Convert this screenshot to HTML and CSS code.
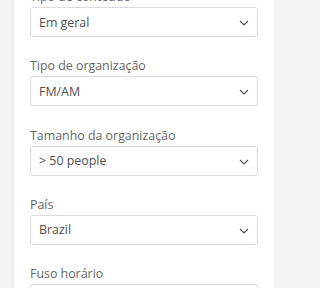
FILE: index.html
```html
<!DOCTYPE html>
<html lang="pt">
<head>
<meta charset="utf-8">
<link rel="stylesheet" href="styles.css">
</head>
<body>
<div class="page">
  <div class="side side-left"></div>
  <div class="card">
    <div class="fields">
      <div class="field">
        <div class="label">Tipo de conteúdo</div>
        <div class="select"><span class="value">Em geral</span><svg class="chev" width="10" height="6" viewBox="0 0 10 6"><polyline points="1,1 5,5 9,1" fill="none" stroke="#555" stroke-width="1.2"/></svg></div>
      </div>
      <div class="field">
        <div class="label">Tipo de organização</div>
        <div class="select"><span class="value">FM/AM</span><svg class="chev" width="10" height="6" viewBox="0 0 10 6"><polyline points="1,1 5,5 9,1" fill="none" stroke="#555" stroke-width="1.2"/></svg></div>
      </div>
      <div class="field">
        <div class="label">Tamanho da organização</div>
        <div class="select"><span class="value">&gt; 50 people</span><svg class="chev" width="10" height="6" viewBox="0 0 10 6"><polyline points="1,1 5,5 9,1" fill="none" stroke="#555" stroke-width="1.2"/></svg></div>
      </div>
      <div class="field">
        <div class="label">País</div>
        <div class="select"><span class="value">Brazil</span><svg class="chev" width="10" height="6" viewBox="0 0 10 6"><polyline points="1,1 5,5 9,1" fill="none" stroke="#555" stroke-width="1.2"/></svg></div>
      </div>
      <div class="field">
        <div class="label">Fuso horário</div>
        <div class="select"><span class="value"></span></div>
      </div>
    </div>
  </div>
  <div class="side side-right"></div>
</div>
</body>
</html>
```
FILE: styles.css
```css
html, body {
  margin: 0;
  padding: 0;
  width: 288px;
  height: 288px;
  overflow: hidden;
  background: #f3f3f3;
}
.page {
  display: flex;
  width: 288px;
  height: 288px;
  font-family: "Open Sans", "Noto Sans", sans-serif;
}
.side {
  flex: 0 0 14px;
}
.side-left {
  background: linear-gradient(to right, #f3f3f3 0px, #f3f3f3 9px, #ececec 13px, #e8e8e8 14px);
}
.side-right {
  background: #f3f3f3;
}
.card {
  flex: 0 0 260px;
  background: #fff;
  padding: 0 16px;
  box-sizing: border-box;
  overflow: hidden;
}
.fields {
  margin-top: -12px;
  display: flex;
  flex-direction: column;
  gap: 20.3px;
}
.label {
  font-size: 12.4px;
  line-height: 17px;
  color: #666;
  margin-bottom: 2px;
}
.select {
  height: 30px;
  box-sizing: border-box;
  border: 1px solid #dcdcdc;
  border-radius: 3px;
  display: flex;
  align-items: center;
  justify-content: space-between;
  padding: 0 8px 0 8px;
}
.value {
  font-size: 12.4px;
  color: #505050;
}
.chev {
  display: block;
  margin-top: 2px;
}
```
